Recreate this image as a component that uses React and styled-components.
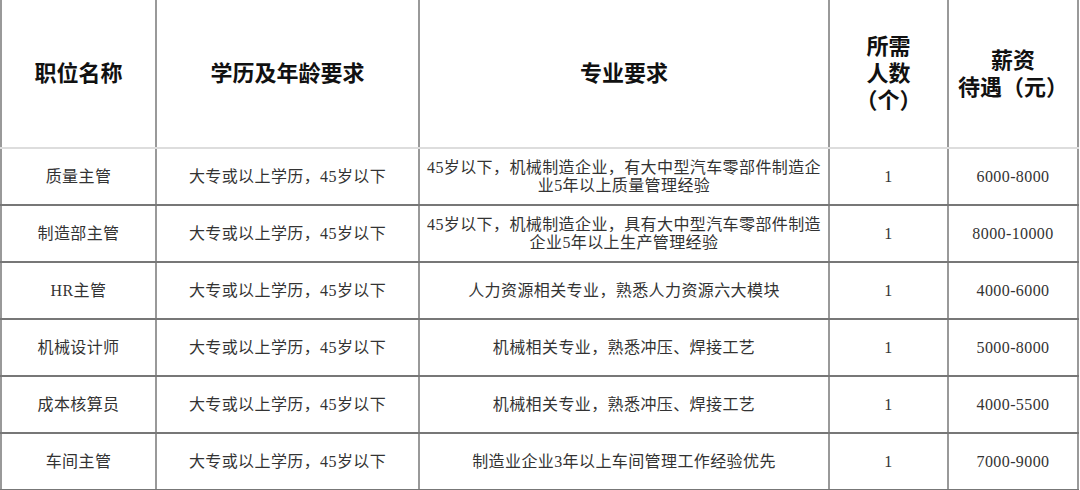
import React from "react";
import styled, { createGlobalStyle } from "styled-components";

const rows = [
  {
    title: "质量主管",
    edu: "大专或以上学历，45岁以下",
    major: ["45岁以下，机械制造企业，有大中型汽车零部件制造企", "业5年以上质量管理经验"],
    count: "1",
    pay: "6000-8000",
  },
  {
    title: "制造部主管",
    edu: "大专或以上学历，45岁以下",
    major: ["45岁以下，机械制造企业，具有大中型汽车零部件制造", "企业5年以上生产管理经验"],
    count: "1",
    pay: "8000-10000",
  },
  {
    title: "HR主管",
    edu: "大专或以上学历，45岁以下",
    major: ["人力资源相关专业，熟悉人力资源六大模块"],
    count: "1",
    pay: "4000-6000",
  },
  {
    title: "机械设计师",
    edu: "大专或以上学历，45岁以下",
    major: ["机械相关专业，熟悉冲压、焊接工艺"],
    count: "1",
    pay: "5000-8000",
  },
  {
    title: "成本核算员",
    edu: "大专或以上学历，45岁以下",
    major: ["机械相关专业，熟悉冲压、焊接工艺"],
    count: "1",
    pay: "4000-5500",
  },
  {
    title: "车间主管",
    edu: "大专或以上学历，45岁以下",
    major: ["制造业企业3年以上车间管理工作经验优先"],
    count: "1",
    pay: "7000-9000",
  },
];

const GlobalStyle = createGlobalStyle`
  body {
    margin: 0;
    background: #fff;
    font-family: "Liberation Serif", "Noto Sans CJK SC", serif;
  }
`;

const App = () => {
  return (
    <Page>
      <GlobalStyle />
      <Table>
        <colgroup>
          <col style={{ width: 155 }} />
          <col style={{ width: 263 }} />
          <col style={{ width: 410 }} />
          <col style={{ width: 119 }} />
          <col style={{ width: 130 }} />
        </colgroup>
        <thead>
          <tr>
            <Head>职位名称</Head>
            <Head>学历及年龄要求</Head>
            <Head>专业要求</Head>
            <Head>
              <Line>所需</Line>
              <Line>人数</Line>
              <Line>（个）</Line>
            </Head>
            <Head>
              <Line>薪资</Line>
              <Line>待遇（元）</Line>
            </Head>
          </tr>
        </thead>
        <tbody>
          {rows.map((row) => (
            <tr key={row.title}>
              <Cell>{row.title}</Cell>
              <Cell>{row.edu}</Cell>
              <Cell $tight={row.major.length > 1}>
                {row.major.map((line, i) => (
                  <Line key={i}>{line}</Line>
                ))}
              </Cell>
              <Cell>{row.count}</Cell>
              <Cell>{row.pay}</Cell>
            </tr>
          ))}
        </tbody>
      </Table>
    </Page>
  );
};

const Page = styled.div`
  width: 1080px;
  height: 490px;
  overflow: hidden;
  background: #fff;
`;

const Table = styled.table`
  width: 1078px;
  table-layout: fixed;
  border-collapse: collapse;
`;

const Head = styled.th`
  height: 147px;
  padding: 0;
  border-left: 2px solid #999;
  border-right: 2px solid #999;
  border-bottom: 2px solid #ddd;
  text-align: center;
  vertical-align: middle;
  font-family: "Liberation Sans", "Noto Sans CJK SC", sans-serif;
  font-size: 22px;
  font-weight: 700;
  line-height: 27px;
  color: #111;
`;

const Cell = styled.td`
  height: 55px;
  padding: 0;
  border-left: 2px solid #999;
  border-right: 2px solid #999;
  border-bottom: 2px solid #777;
  text-align: center;
  vertical-align: middle;
  font-size: 16px;
  letter-spacing: 0.4px;
  line-height: ${(p) => (p.$tight ? "18px" : "20px")};
  color: #333;
  white-space: nowrap;
`;

const Line = styled.div``;

export default App;
